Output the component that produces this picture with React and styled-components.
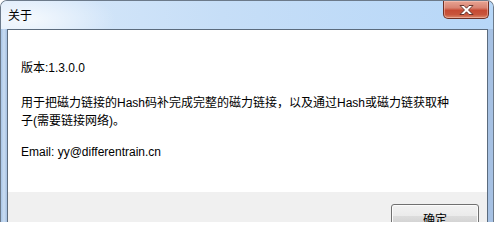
import styled, { createGlobalStyle } from 'styled-components';

const GlobalStyle = createGlobalStyle`
  html, body {
    margin: 0;
    padding: 0;
    background: #ffffff;
  }
  body {
    font-family: "Liberation Sans", "Noto Sans CJK SC", sans-serif;
    font-size: 12px;
    color: #000;
  }
`;

const Window = styled.div`
  width: 494px;
  height: 222px;
  box-sizing: border-box;
  border: 1px solid #6c7a8a;
  border-bottom: none;
  border-radius: 7px 7px 0 0;
  overflow: hidden;
  display: flex;
  flex-direction: column;
  background: linear-gradient(90deg, #d5e6f8 0%, #c3dbf4 40%, #b9d5f3 100%);
`;

const TitleBar = styled.div`
  height: 28px;
  flex: none;
  display: flex;
  align-items: flex-start;
  justify-content: space-between;
  background: radial-gradient(ellipse 90px 30px at 25px 18px, rgba(255, 255, 255, 0.75), rgba(255, 255, 255, 0) 100%),
    linear-gradient(90deg, #d9e9fa 0%, #c6def7 45%, #b7d7f8 100%);
`;

const Title = styled.div`
  padding: 6px 0 0 7px;
  font-family: "Noto Sans CJK SC", sans-serif;
  font-size: 12px;
  line-height: 16px;
  color: #000;
`;

const CloseButton = styled.div`
  width: 46px;
  height: 18px;
  margin-right: 4px;
  box-sizing: border-box;
  border: 1px solid #6e3025;
  border-top: none;
  border-radius: 0 0 5px 5px;
  display: flex;
  align-items: center;
  justify-content: center;
  background: linear-gradient(180deg, #e8a493 0%, #d88372 40%, #c64a33 55%, #c8553c 80%, #dc8a6c 100%);
  box-shadow: inset 0 0 0 1px rgba(255, 210, 200, 0.45);
`;

const Frame = styled.div`
  flex: 1;
  display: flex;
  padding: 0 5px 0 6px;
  background: linear-gradient(90deg, #a9c6e8 0%, #c9dcf1 3px, #a6c1e3 6px);
`;

const Content = styled.div`
  flex: 1;
  display: flex;
  flex-direction: column;
  border: 1px solid #5b6b7d;
  border-bottom: none;
  background: #fff;
`;

const Body = styled.div`
  height: 162px;
  box-sizing: border-box;
  padding: 29px 13px 0 13px;
`;

const Line = styled.p`
  margin: 0 0 ${({ gap }) => gap || 0}px 0;
  line-height: ${({ wrap }) => (wrap ? 18 : 19)}px;
  width: ${({ wrap }) => (wrap ? `${wrap}px` : 'auto')};
`;

const Footer = styled.div`
  flex: 1;
  background: #f0f0f0;
  display: flex;
  justify-content: flex-end;
  align-items: flex-start;
  padding: 12px 8px 0 0;
`;

const Button = styled.div`
  width: 88px;
  height: 23px;
  box-sizing: border-box;
  border: 1px solid #707070;
  border-radius: 3px;
  background: linear-gradient(180deg, #f2f2f2 0%, #ebebeb 50%, #dddddd 51%, #cfcfcf 100%);
  box-shadow: inset 0 0 0 1px #fcfcfc;
  text-align: center;
  padding-top: 6px;
  font-family: "Noto Sans CJK SC", sans-serif;
  font-size: 12px;
  line-height: 16px;
`;

const CloseIcon = () => (
  <svg width="15" height="10" viewBox="0 0 15 10">
    <path
      d="M1 0.5 H5 L7.5 3.2 L10 0.5 H14 L9.5 5 L14 9.5 H10 L7.5 6.8 L5 9.5 H1 L5.5 5 Z"
      fill="#ffffff"
      stroke="#5a2a22"
      strokeWidth="0.9"
      strokeLinejoin="round"
    />
  </svg>
);

export default function App() {
  return (
    <>
      <GlobalStyle />
      <Window>
        <TitleBar>
          <Title>关于</Title>
          <CloseButton>
            <CloseIcon />
          </CloseButton>
        </TitleBar>
        <Frame>
          <Content>
            <Body>
              <Line gap={16}>版本:1.3.0.0</Line>
              <Line wrap={430} gap={13}>
                用于把磁力链接的Hash码补完成完整的磁力链接，以及通过Hash或磁力链获取种子(需要链接网络)。
              </Line>
              <Line>Email: yy@differentrain.cn</Line>
            </Body>
            <Footer>
              <Button>确定</Button>
            </Footer>
          </Content>
        </Frame>
      </Window>
    </>
  );
}
